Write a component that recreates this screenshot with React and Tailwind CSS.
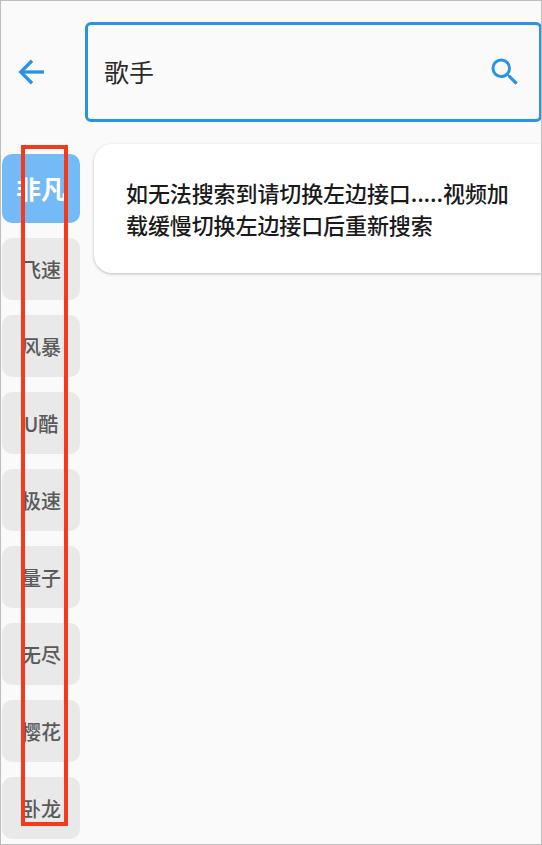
import React from 'react';

const sources = ['飞速', '风暴', 'U酷', '极速', '量子', '无尽', '樱花', '卧龙'];

function ArrowBack() {
  return (
    <svg width="36" height="36" viewBox="0 0 24 24" fill="none" stroke="#2a92e4" strokeWidth="2.2">
      <path d="M20 12H5" />
      <path d="M12 4.5L4.5 12l7.5 7.5" />
    </svg>
  );
}

function SearchIcon() {
  return (
    <svg width="36" height="36" viewBox="0 0 24 24" fill="#2a92e4">
      <path d="M15.5 14h-.79l-.28-.27A6.47 6.47 0 0 0 16 9.5 6.5 6.5 0 1 0 9.5 16c1.61 0 3.09-.59 4.23-1.57l.27.28v.79l5 4.99L20.49 19l-4.99-5zm-6 0C7.01 14 5 11.99 5 9.5S7.01 5 9.5 5 14 7.01 14 9.5 11.99 14 9.5 14z" />
    </svg>
  );
}

export default function App() {
  return (
    <div className="relative h-[845px] w-[542px] overflow-hidden border border-[#bdbdbd] bg-[#fafafa] font-['Noto_Sans_CJK_SC','Roboto',sans-serif]">
      {/* Search header */}
      <header className="flex h-[143px] items-center pb-[2px]">
        <div className="flex w-[84px] shrink-0 justify-center pr-[22px]">
          <ArrowBack />
        </div>
        <div className="-mr-px flex h-[100px] grow items-center justify-between rounded-[6px] border-[3px] border-[#2a92e4] pl-[16px] pr-[16px]">
          <span className="text-[25px] text-[#2b2b2b]">歌手</span>
          <SearchIcon />
        </div>
      </header>

      <div className="flex">
        {/* Interface list */}
        <nav className="flex w-[93px] shrink-0 flex-col gap-[15px] pl-px pt-[10px]">
          <div className="flex h-[69px] w-[78px] items-center justify-center rounded-[10px] bg-[#74baf7] text-[25px] font-bold text-white">
            非凡
          </div>
          {sources.map((name) => (
            <div
              key={name}
              className="flex h-[62px] w-[78px] items-end justify-center rounded-[10px] bg-[#e9e9e9] pb-[18px] text-[20px] leading-[24px] font-medium text-[#5a5a5a]"
            >
              {name}
            </div>
          ))}
        </nav>

        {/* Notice card */}
        <main className="grow">
          <div className="-mr-px h-[129px] rounded-l-[18px] bg-white pt-[32px] pl-[32px] pr-[24px] shadow-[0_1px_3px_rgba(0,0,0,0.25)]">
            <p className="text-[22px] leading-[32px] font-medium tracking-[-0.1px] text-[#1a1a1a]">
              如无法搜索到请切换左边接口.....视频加载缓慢切换左边接口后重新搜索
            </p>
          </div>
        </main>
      </div>

      {/* Red annotation box */}
      <div className="absolute left-[20px] top-[144px] h-[681px] w-[47px] border-4 border-[#f5391a]" />
    </div>
  );
}
